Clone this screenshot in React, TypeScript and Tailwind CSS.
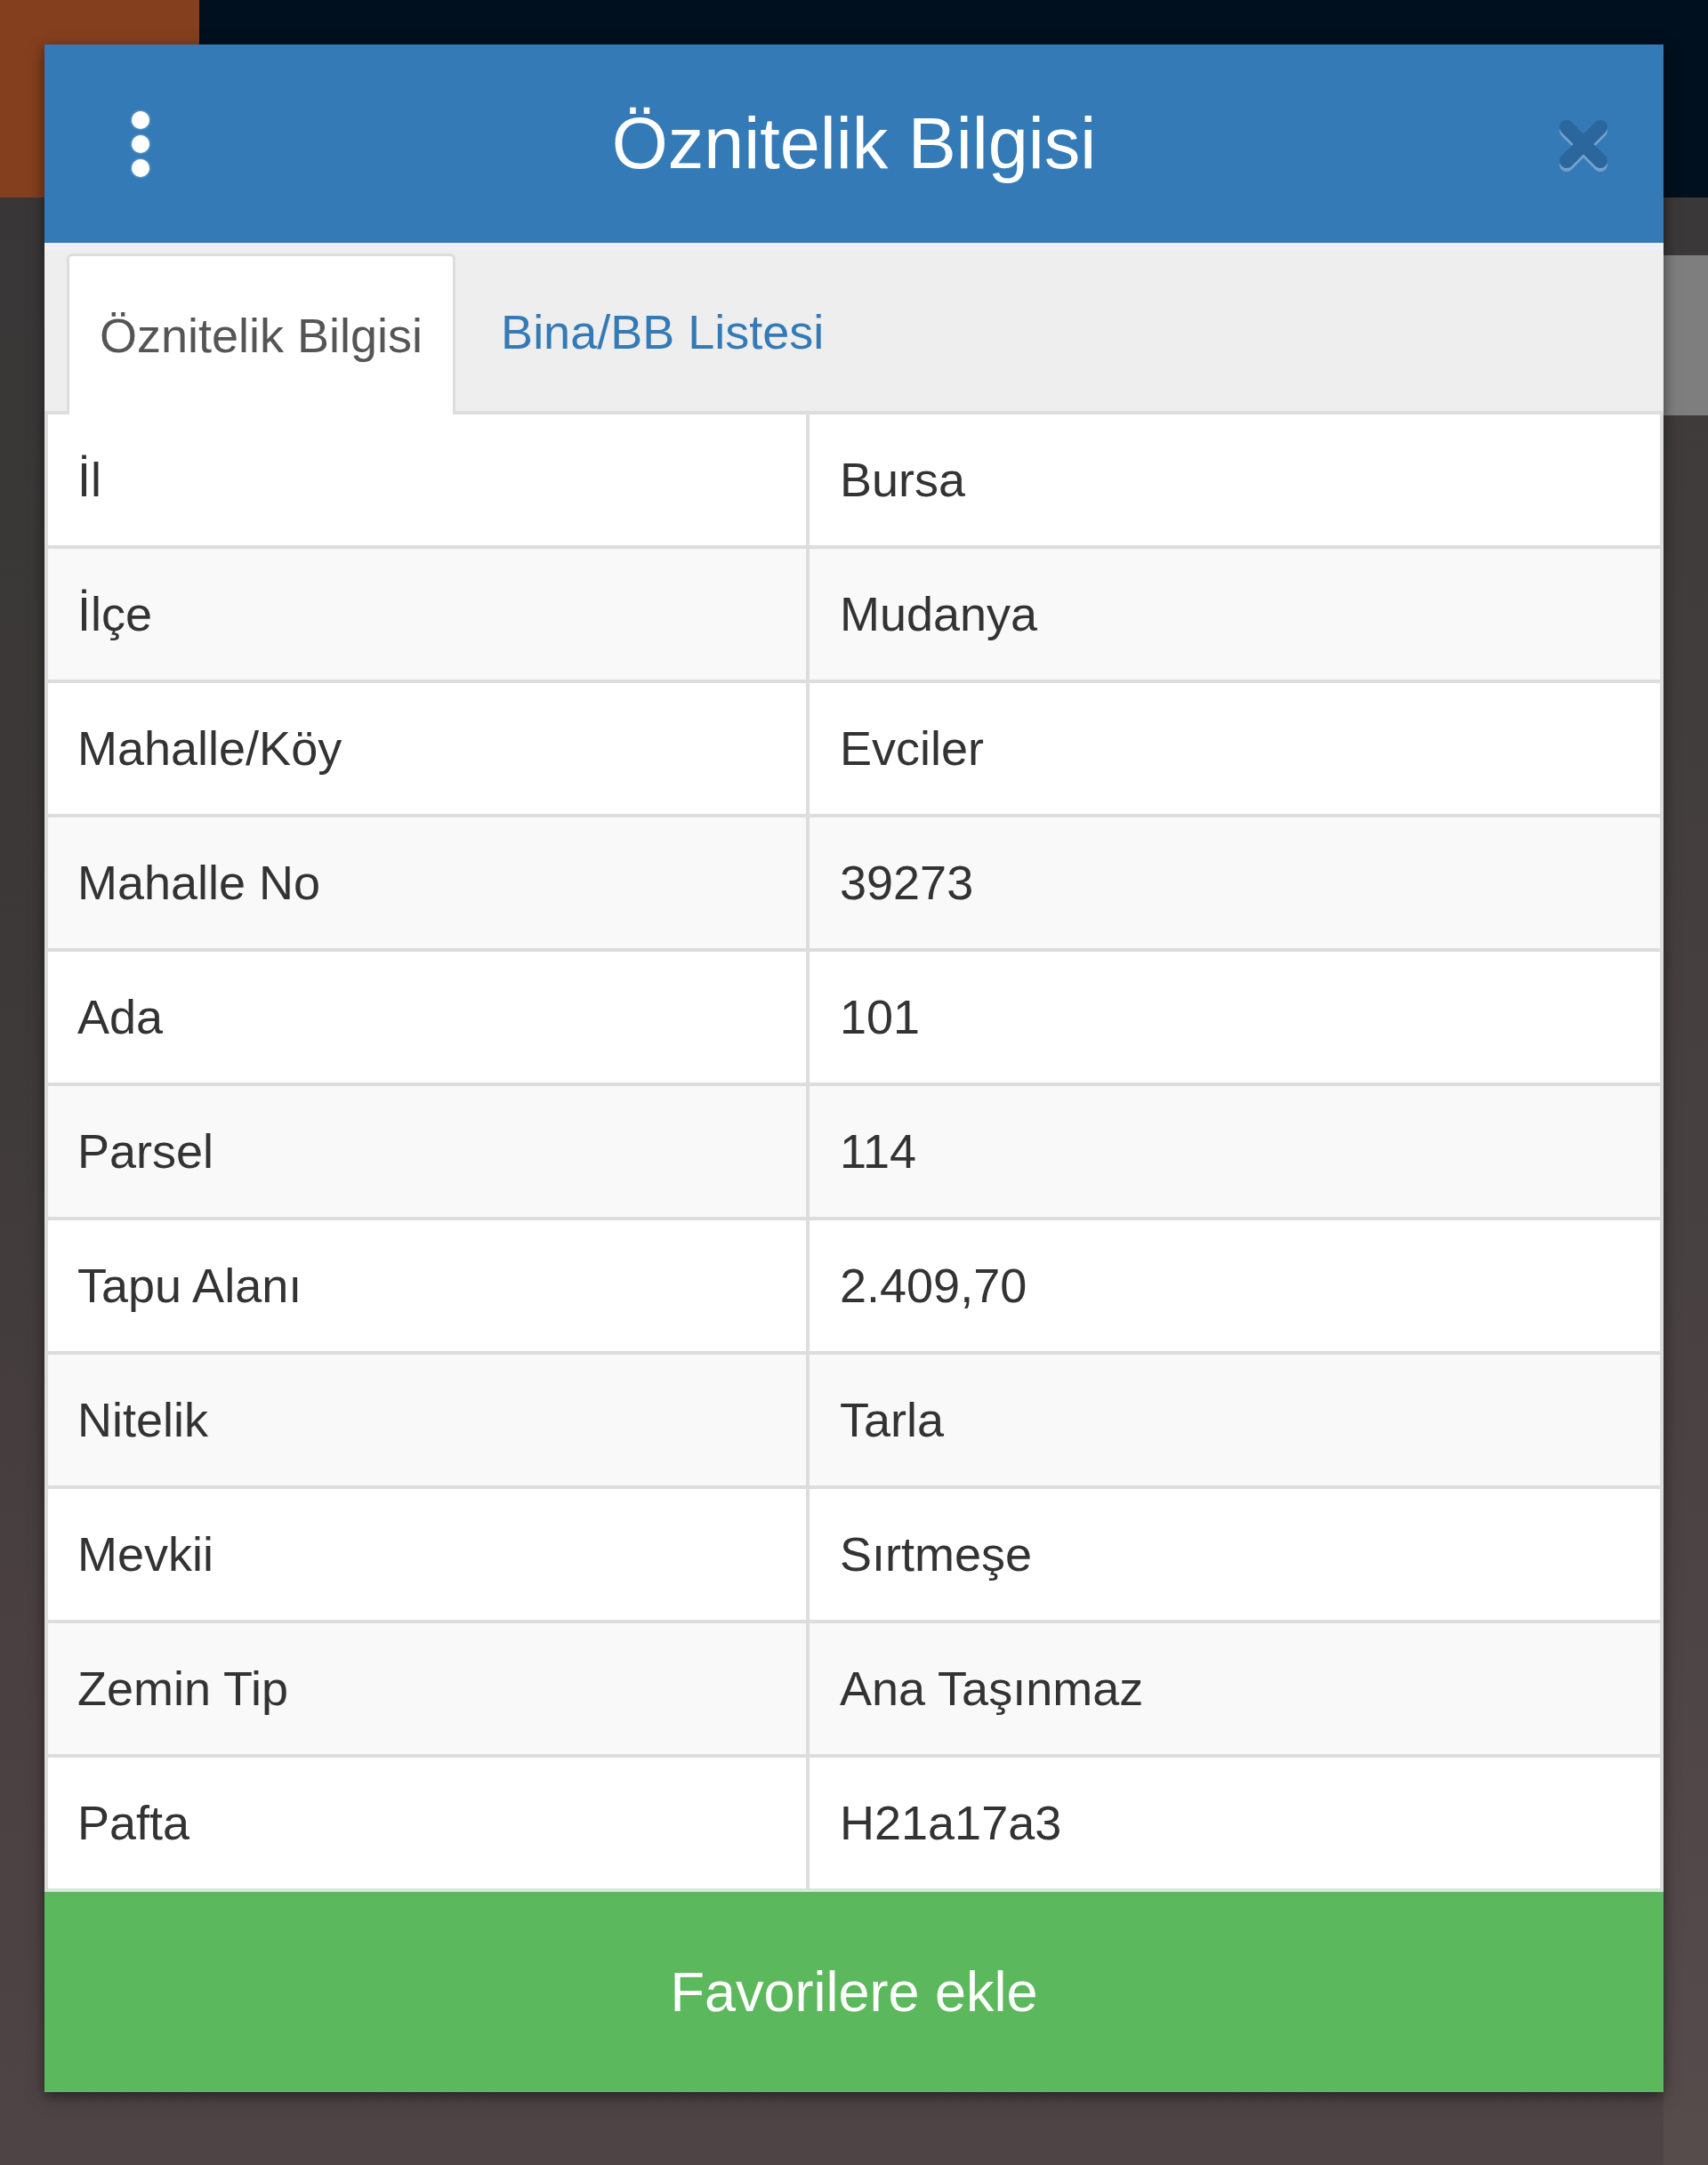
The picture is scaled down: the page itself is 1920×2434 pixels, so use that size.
import React from "react";

type Row = { label: string; value: string };

const rows: Row[] = [
  { label: "İl", value: "Bursa" },
  { label: "İlçe", value: "Mudanya" },
  { label: "Mahalle/Köy", value: "Evciler" },
  { label: "Mahalle No", value: "39273" },
  { label: "Ada", value: "101" },
  { label: "Parsel", value: "114" },
  { label: "Tapu Alanı", value: "2.409,70" },
  { label: "Nitelik", value: "Tarla" },
  { label: "Mevkii", value: "Sırtmeşe" },
  { label: "Zemin Tip", value: "Ana Taşınmaz" },
  { label: "Pafta", value: "H21a17a3" },
];

const font = { fontFamily: '"Liberation Sans", Arial, Helvetica, sans-serif' };

const MenuDots = () => (
  <div className="flex flex-col items-center gap-[7px]">
    <span className="block w-[20px] h-[20px] rounded-full bg-white shadow-[0_0_3px_rgba(255,255,255,0.6)]" />
    <span className="block w-[20px] h-[20px] rounded-full bg-white shadow-[0_0_3px_rgba(255,255,255,0.6)]" />
    <span className="block w-[20px] h-[20px] rounded-full bg-white shadow-[0_0_3px_rgba(255,255,255,0.6)]" />
  </div>
);

const CloseIcon = () => (
  <svg
    width="60"
    height="60"
    viewBox="0 0 60 60"
    className="drop-shadow-[0_4px_0_rgba(255,255,255,0.3)]"
  >
    <g stroke="#2b669d" strokeWidth="16" strokeLinecap="round">
      <line x1="11" y1="10" x2="49" y2="48" />
      <line x1="49" y1="10" x2="11" y2="48" />
    </g>
  </svg>
);

export default function App() {
  return (
    <div
      className="relative w-[1920px] h-[2434px] overflow-hidden flex flex-col"
      style={font}
    >
      {/* map background */}
      <div className="flex h-[222px]">
        <div className="w-[224px] bg-[#843f1e]" />
        <div className="flex-1 bg-[#01101e]" />
      </div>
      <div className="flex flex-1">
        <div className="flex-1 bg-[linear-gradient(180deg,#383636_0%,#3d3939_40%,#4a4041_75%,#4e4445_100%)]" />
        <div className="w-[50px] flex flex-col">
          <div className="h-[65px] bg-[#3a3838]" />
          <div className="h-[180px] bg-[#7e7e7e]" />
          <div className="flex-1 bg-[linear-gradient(180deg,#3f3b3b_0%,#4a4243_60%,#574c4c_100%)]" />
        </div>
      </div>

      {/* modal */}
      <div className="absolute left-[50px] top-[50px] w-[1820px] bg-white shadow-[0_5px_15px_rgba(0,0,0,0.5)]">
        <div className="h-[223px] bg-[#337ab7] grid grid-cols-[1fr_auto_1fr] items-center">
          <div className="justify-self-start pl-[98px]">
            <MenuDots />
          </div>
          <h4 className="text-white text-[81px] leading-none">
            Öznitelik Bilgisi
          </h4>
          <div className="justify-self-end pr-[60px] pt-[2px]">
            <CloseIcon />
          </div>
        </div>

        <div className="h-[193px] bg-[#eeeeee] border-t-[8px] border-t-[#eef0f4] border-b-[4px] border-b-[#dddddd] flex items-end pl-[25px]">
          <div className="h-[181px] -mb-[4px] bg-white border-[3px] border-b-0 border-[#dddddd] rounded-t-[6px] px-[34px] flex items-center text-[54px] text-[#555555]">
            Öznitelik Bilgisi
          </div>
          <div className="h-[177px] ml-[14px] px-[37px] flex items-center text-[54px] text-[#337ab7]">
            Bina/BB Listesi
          </div>
        </div>

        <div className="border-x-[4px] border-[#dddddd]">
          {rows.map((row, i) => (
            <div
              key={row.label}
              className={`flex h-[151px] border-b-[4px] ${
                i === rows.length - 1 ? "border-[#d6ead6]" : "border-[#dddddd]"
              } ${i % 2 === 0 ? "bg-white" : "bg-[#f9f9f9]"}`}
            >
              <div className="w-[856px] border-r-[4px] border-[#dddddd] pl-[33px] flex items-center text-[54px] text-[#333333]">
                {row.label}
              </div>
              <div className="flex-1 pl-[34px] flex items-center text-[54px] text-[#333333]">
                {row.value}
              </div>
            </div>
          ))}
        </div>

        <button className="w-full h-[225px] bg-[#5cb85c] text-white text-[63px] flex items-center justify-center">
          Favorilere ekle
        </button>
      </div>
    </div>
  );
}
